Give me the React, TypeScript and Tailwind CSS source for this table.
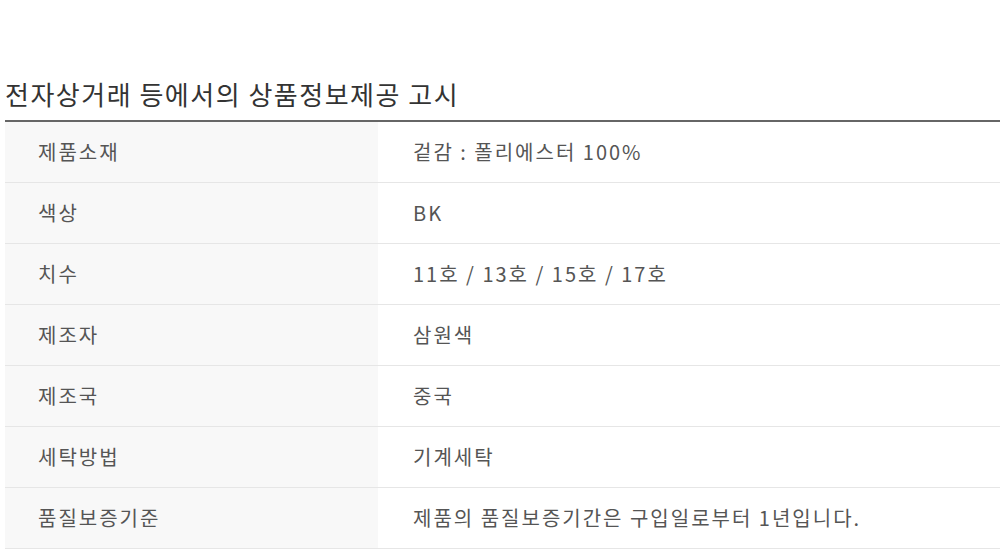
const rows: [string, string][] = [
  ['제품소재', '겉감 : 폴리에스터 100%'],
  ['색상', 'BK'],
  ['치수', '11호 / 13호 / 15호 / 17호'],
  ['제조자', '삼원색'],
  ['제조국', '중국'],
  ['세탁방법', '기계세탁'],
  ['품질보증기준', '제품의 품질보증기간은 구입일로부터 1년입니다.'],
]

export default function App() {
  return (
    <div className="h-[549px] w-[1000px] overflow-hidden bg-white pl-[5px] font-['Noto_Sans_CJK_KR','Noto_Sans',sans-serif]">
      <h2 className="pt-[78px] text-[26px] leading-[32px] tracking-[1.5px] text-[#333]">전자상거래 등에서의 상품정보제공 고시</h2>
      <table className="mt-[10px] w-full border-collapse border-t-[2px] border-[#666]">
        <tbody>
          {rows.map(([k, v]) => (
            <tr key={k} className="border-b border-[#e6e6e6]">
              <th className="h-[61px] w-[373px] bg-[#f8f8f8] pl-[33px] text-left align-middle text-[20px] font-normal tracking-[2px] text-[#555]">
                {k}
              </th>
              <td className="h-[61px] pl-[35px] align-middle text-[20px] tracking-[2px] text-[#555]">{v}</td>
            </tr>
          ))}
        </tbody>
      </table>
    </div>
  )
}
